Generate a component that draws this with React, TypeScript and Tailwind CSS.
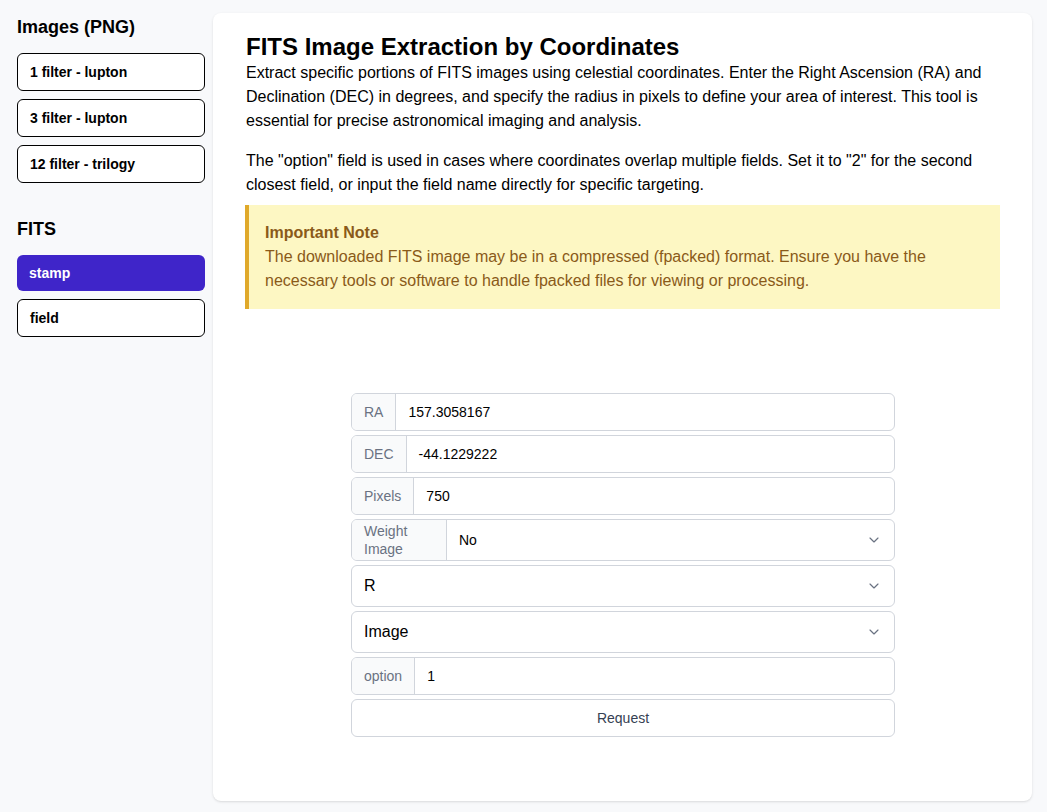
import { ChevronDown } from "lucide-react";

const pngItems = ["1 filter - lupton", "3 filter - lupton", "12 filter - trilogy"];
const fitsItems = ["stamp", "field"];

function SideButton({ label, active }: { label: string; active?: boolean }) {
  return (
    <button
      className={`w-full rounded-md px-3 text-left text-sm font-bold ${
        active ? "h-[36px] bg-[#3f25c9] text-white" : "h-[38px] bg-white border border-black text-black"
      }`}
    >
      {label}
    </button>
  );
}

function InputRow({ label, value }: { label: string; value: string }) {
  return (
    <div className="flex h-[38px] rounded-md border border-gray-300 bg-white overflow-hidden">
      <div className="flex items-center bg-gray-50 border-r border-gray-300 px-3 text-sm text-gray-500">
        {label}
      </div>
      <div className="flex-1 flex items-center px-3 text-sm text-black">{value}</div>
    </div>
  );
}

function SelectRow({ value }: { value: string }) {
  return (
    <div className="flex items-center justify-between h-[42px] rounded-md border border-gray-300 bg-white px-3">
      <span className="text-base text-black">{value}</span>
      <ChevronDown size={16} strokeWidth={1.75} className="text-gray-500" />
    </div>
  );
}

export default function App() {
  return (
    <div
      className="flex min-h-screen bg-[#f8f9fb]"
      style={{ fontFamily: '"Liberation Sans", Arial, sans-serif' }}
    >
      <aside className="w-[213px] shrink-0 pl-[17px] pr-2 pt-[16px]">
        <h2 className="text-lg font-bold text-black leading-[22px]">Images (PNG)</h2>
        <div className="mt-[15px] flex flex-col gap-2">
          {pngItems.map((item) => (
            <SideButton key={item} label={item} />
          ))}
        </div>
        <h2 className="mt-[35px] text-lg font-bold text-black leading-[22px]">FITS</h2>
        <div className="mt-[15px] flex flex-col gap-2">
          {fitsItems.map((item) => (
            <SideButton key={item} label={item} active={item === "stamp"} />
          ))}
        </div>
      </aside>

      <main className="flex-1 pt-[13px] pb-[11px] pr-[15px] flex">
        <div className="flex-1 bg-white rounded-lg shadow-sm pr-[32px] pl-[33px] pt-[20px]">
          <h1 className="text-2xl font-bold text-black leading-[28px]">
            FITS Image Extraction by Coordinates
          </h1>
          <p className="text-base leading-6 text-black">
            Extract specific portions of FITS images using celestial coordinates. Enter the Right Ascension (RA) and
            Declination (DEC) in degrees, and specify the radius in pixels to define your area of interest. This tool is
            essential for precise astronomical imaging and analysis.
          </p>
          <p className="mt-4 text-base leading-6 text-black">
            The "option" field is used in cases where coordinates overlap multiple fields. Set it to "2" for the second
            closest field, or input the field name directly for specific targeting.
          </p>
          <div className="mt-[8px] bg-[#fdf7c3] border-l-4 border-[#e0a92a] pl-[16px] pr-4 py-[16px] -ml-px">
            <p className="text-base font-bold text-[#8a5a19] leading-6">Important Note</p>
            <p className="text-base text-[#8a5a19] leading-6">
              The downloaded FITS image may be in a compressed (fpacked) format. Ensure you have the necessary tools or
              software to handle fpacked files for viewing or processing.
            </p>
          </div>

          <form className="mx-auto mt-[84px] w-[544px] flex flex-col gap-1" onSubmit={(e) => e.preventDefault()}>
            <InputRow label="RA" value="157.3058167" />
            <InputRow label="DEC" value="-44.1229222" />
            <InputRow label="Pixels" value="750" />
            <div className="flex h-[42px] rounded-md border border-gray-300 bg-white overflow-hidden">
              <div className="w-[95px] flex items-center bg-gray-50 border-r border-gray-300 px-3 text-sm leading-[18px] text-gray-500">
                Weight Image
              </div>
              <div className="flex-1 flex items-center justify-between px-3 text-sm text-black">
                <span>No</span>
                <ChevronDown size={16} strokeWidth={1.75} className="text-gray-500" />
              </div>
            </div>
            <SelectRow value="R" />
            <SelectRow value="Image" />
            <InputRow label="option" value="1" />
            <button className="h-[38px] rounded-md border border-gray-300 bg-white text-sm text-gray-700">
              Request
            </button>
          </form>
        </div>
      </main>
    </div>
  );
}
